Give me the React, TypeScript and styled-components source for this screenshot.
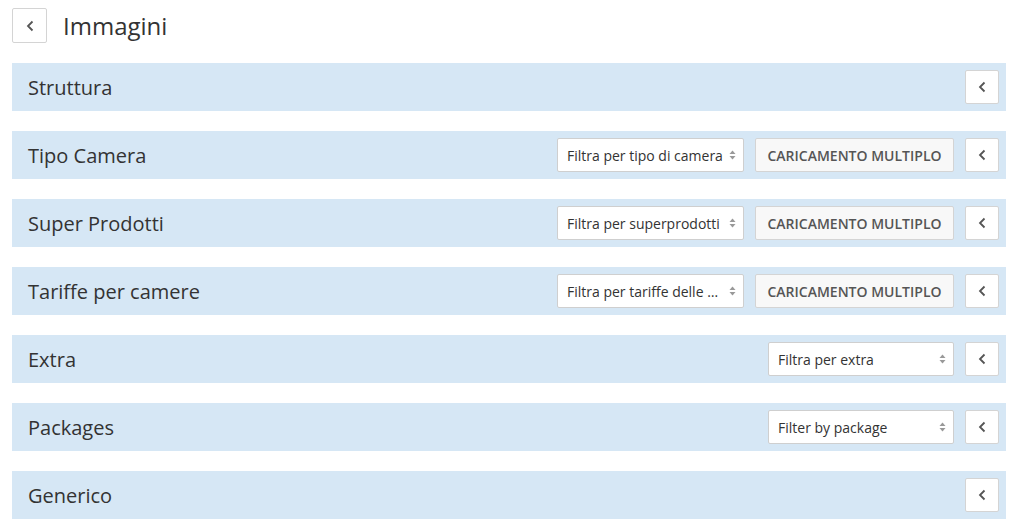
import React from 'react';
import styled, { createGlobalStyle } from 'styled-components';

const GlobalStyle = createGlobalStyle`
  body {
    margin: 0;
    background: #fff;
    font-family: "Open Sans", "Noto Sans", sans-serif;
    color: #333;
  }
`;

const Page = styled.div`
  padding: 8px 8px 8px 12px;
`;

const Header = styled.div`
  display: flex;
  align-items: center;
  gap: 16px;
  margin-bottom: 20px;
`;

const Title = styled.h1`
  margin: 0;
  font-size: 24px;
  font-weight: 400;
  color: #333;
`;

const IconButton = styled.button<{ $size?: number }>`
  width: ${(p) => p.$size ?? 34}px;
  height: ${(p) => p.$size ?? 34}px;
  padding: 0;
  display: flex;
  align-items: center;
  justify-content: center;
  background: #fff;
  border: 1px solid #d4d4d4;
  border-radius: 2px;
  color: #555;
  flex-shrink: 0;
  cursor: pointer;
`;

const PanelList = styled.div`
  display: flex;
  flex-direction: column;
  gap: 20px;
`;

const Panel = styled.div`
  height: 48px;
  display: flex;
  align-items: center;
  padding: 0 7px 0 16px;
  background: #d6e7f5;
  box-sizing: border-box;
`;

const PanelTitle = styled.div`
  flex: 1;
  font-size: 20px;
  color: #333;
`;

const Controls = styled.div`
  display: flex;
  align-items: center;
  gap: 11px;
`;

const SelectBox = styled.div<{ $width: number }>`
  width: ${(p) => p.$width}px;
  height: 34px;
  box-sizing: border-box;
  display: flex;
  align-items: center;
  gap: 5px;
  padding: 0 7px 0 9px;
  background: #fff;
  border: 1px solid #cfcfcf;
  border-radius: 2px;
  font-size: 14px;
  color: #333;
`;

const SelectText = styled.span`
  flex: 1;
  white-space: nowrap;
  overflow: hidden;
  text-overflow: ellipsis;
`;

const ActionButton = styled.button`
  height: 34px;
  width: 199px;
  box-sizing: border-box;
  background: #f8f8f8;
  border: 1px solid #d4d4d4;
  border-radius: 2px;
  font-family: "Open Sans", "Noto Sans", sans-serif;
  font-size: 14px;
  font-weight: 600;
  color: #555;
`;

const Chevron = () => (
  <svg width="8" height="12" viewBox="0 0 8 12" fill="none">
    <path d="M6.5 1.5 L2 6 L6.5 10.5" stroke="#555" strokeWidth="1.8" />
  </svg>
);

const Arrows = () => (
  <svg width="7" height="10" viewBox="0 0 7 10" style={{ flexShrink: 0 }}>
    <path d="M3.5 0.5 L6.5 4 H0.5 Z" fill="#999" />
    <path d="M3.5 9.5 L6.5 6 H0.5 Z" fill="#999" />
  </svg>
);

type Section = {
  title: string;
  filter?: string;
  filterWidth?: number;
  bulk?: boolean;
};

const sections: Section[] = [
  { title: 'Struttura' },
  { title: 'Tipo Camera', filter: 'Filtra per tipo di camera', filterWidth: 187, bulk: true },
  { title: 'Super Prodotti', filter: 'Filtra per superprodotti', filterWidth: 187, bulk: true },
  { title: 'Tariffe per camere', filter: 'Filtra per tariffe delle camere', filterWidth: 187, bulk: true },
  { title: 'Extra', filter: 'Filtra per extra', filterWidth: 186 },
  { title: 'Packages', filter: 'Filter by package', filterWidth: 186 },
  { title: 'Generico' },
];

const App: React.FC = () => {
  return (
    <Page>
      <GlobalStyle />
      <Header>
        <IconButton $size={35}>
          <Chevron />
        </IconButton>
        <Title>Immagini</Title>
      </Header>
      <PanelList>
        {sections.map((s) => (
          <Panel key={s.title}>
            <PanelTitle>{s.title}</PanelTitle>
            <Controls>
              {s.filter && (
                <SelectBox $width={s.filterWidth ?? 186}>
                  <SelectText>{s.filter}</SelectText>
                  <Arrows />
                </SelectBox>
              )}
              {s.bulk && <ActionButton>CARICAMENTO MULTIPLO</ActionButton>}
              <IconButton>
                <Chevron />
              </IconButton>
            </Controls>
          </Panel>
        ))}
      </PanelList>
    </Page>
  );
};

export default App;
